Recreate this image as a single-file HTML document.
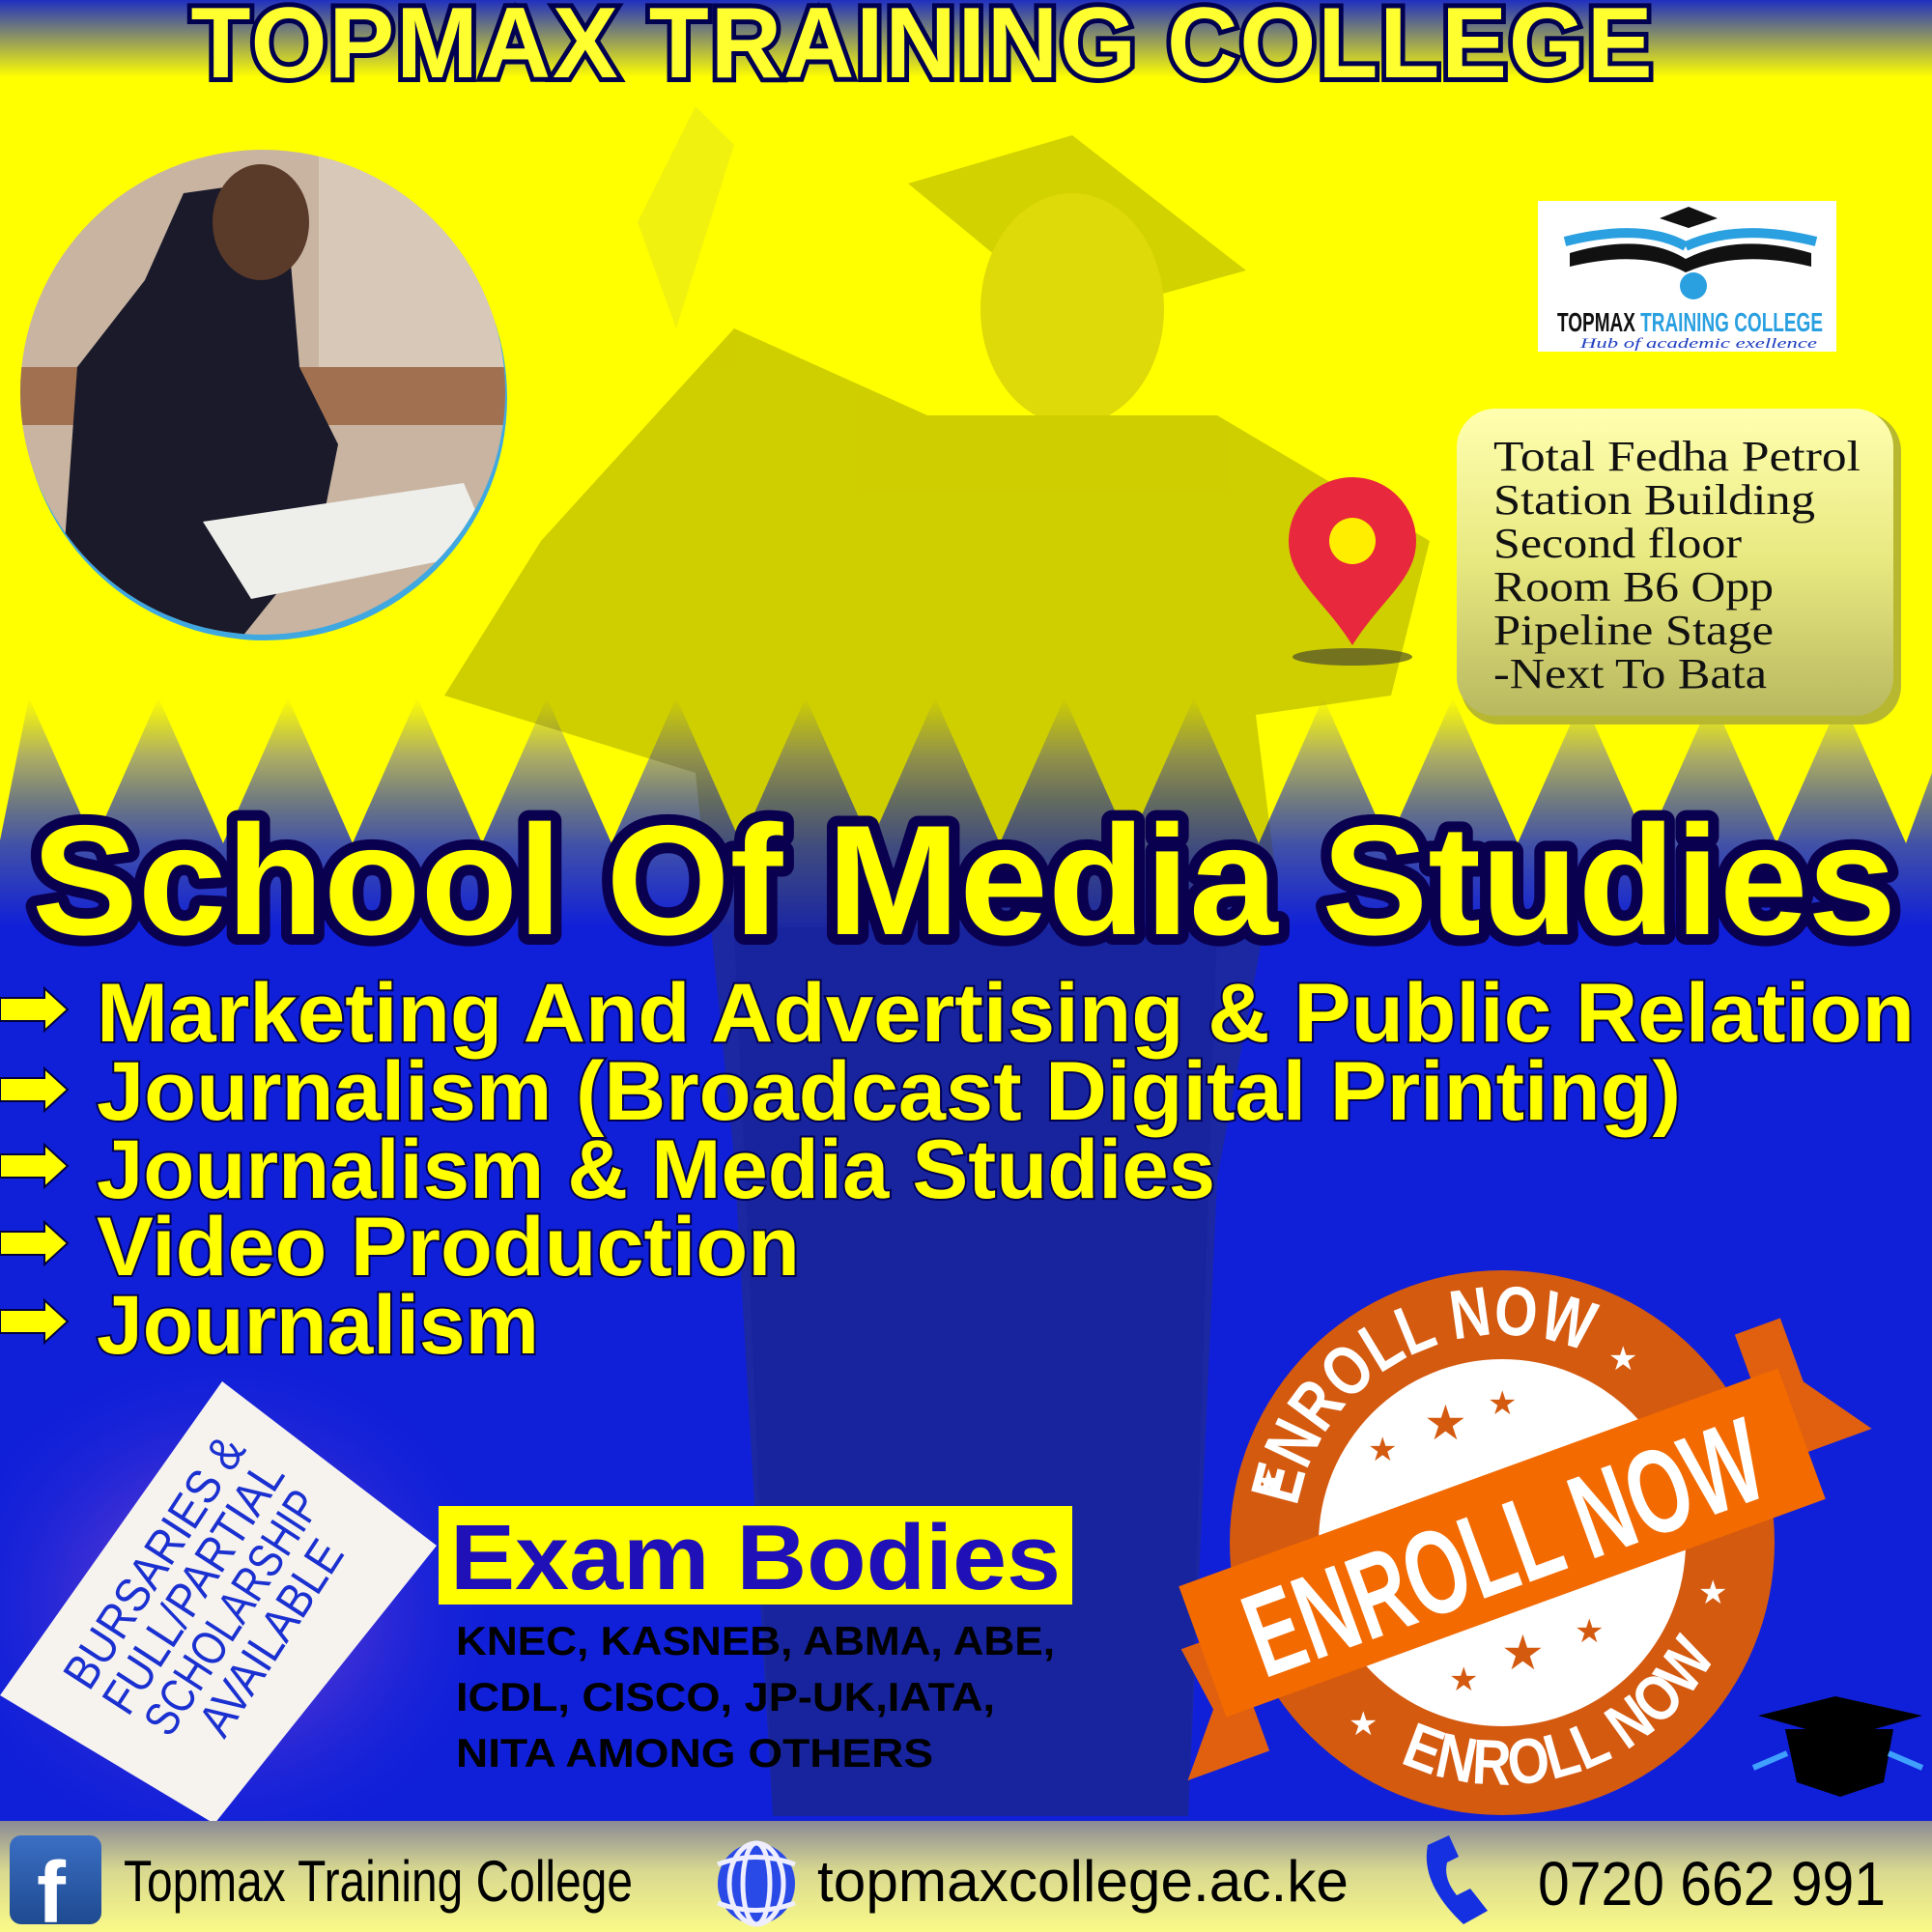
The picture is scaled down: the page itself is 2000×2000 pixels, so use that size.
<!DOCTYPE html>
<html><head><meta charset="utf-8"><style>
html,body{margin:0;padding:0;width:2000px;height:2000px;overflow:hidden}
svg{display:block}
</style></head><body>
<svg width="2000" height="2000" viewBox="0 0 2000 2000" xmlns="http://www.w3.org/2000/svg">
<defs>
<linearGradient id="topg" x1="0" y1="0" x2="0" y2="1">
<stop offset="0" stop-color="#2030c0"/><stop offset="1" stop-color="#ffff00"/></linearGradient>
<linearGradient id="zz" gradientUnits="userSpaceOnUse" x1="0" y1="722" x2="0" y2="960">
<stop offset="0" stop-color="#ffff00"/><stop offset="0.25" stop-color="#b0b060"/><stop offset="0.45" stop-color="#707a80"/><stop offset="0.65" stop-color="#4050a8"/><stop offset="1" stop-color="#1020d8"/></linearGradient>
<linearGradient id="footg" x1="0" y1="0" x2="0" y2="1">
<stop offset="0" stop-color="#8a8a96"/><stop offset="0.45" stop-color="#d8d890"/><stop offset="1" stop-color="#fafa88"/></linearGradient>
<linearGradient id="addrg" x1="0" y1="0" x2="0" y2="1">
<stop offset="0" stop-color="#ffffb0"/><stop offset="0.5" stop-color="#e8e880"/><stop offset="1" stop-color="#b8b860"/></linearGradient>
<radialGradient id="purp" cx="0.5" cy="0.5" r="0.5">
<stop offset="0" stop-color="#a050d0"/><stop offset="1" stop-color="#1020d8" stop-opacity="0"/></radialGradient>
<linearGradient id="fb" x1="0" y1="0" x2="0" y2="1"><stop offset="0" stop-color="#3b6fc4"/><stop offset="1" stop-color="#1e4a90"/></linearGradient>
<clipPath id="cc"><circle cx="272" cy="406" r="251"/></clipPath>
</defs>
<rect width="2000" height="2000" fill="#ffff00"/>
<rect width="2000" height="80" fill="url(#topg)"/>
<rect y="950" width="2000" height="940" fill="#1020d8"/>
<path d="M0 870 L30 722 L97 873 L164 722 L231 873 L298 722 L365 873 L432 722 L499 873 L566 722 L633 873 L700 722 L767 873 L834 722 L901 873 L968 722 L1035 873 L1102 722 L1169 873 L1236 722 L1303 873 L1370 722 L1437 873 L1504 722 L1571 873 L1638 722 L1705 873 L1772 722 L1839 873 L1906 722 L1973 873 L2000 800 L2000 960 L0 960Z" fill="url(#zz)"/>
<g opacity="0.25">
<path d="M660 230 L720 110 L760 150 L700 340 Z" fill="#c8c840"/>
<path d="M940 190 L1110 140 L1290 280 L1110 330 Z" fill="#505000"/>
<ellipse cx="1110" cy="320" rx="95" ry="120" fill="#806a20"/>
<path d="M560 560 L760 340 L960 430 L1260 430 L1480 560 L1440 720 L1300 740 L1320 900 L1260 1220 L1230 1880 L800 1880 L760 1200 L720 800 L460 720 Z" fill="#404000"/>
</g>
<path d="M760 960 L1260 960 L1230 1880 L800 1880 Z" fill="#0a1890" opacity="0.25"/>
<text x="955" y="80" text-anchor="middle" font-family="Liberation Sans, sans-serif" font-weight="bold" font-size="104" textLength="1515" lengthAdjust="spacingAndGlyphs" fill="#ffff30" stroke="#000050" stroke-width="10" paint-order="stroke" letter-spacing="2">TOPMAX TRAINING COLLEGE</text>
<circle cx="274" cy="412" r="251" fill="#40a8e0"/>
<g clip-path="url(#cc)">
<rect x="0" y="150" width="540" height="520" fill="#c8b4a0"/>
<rect x="330" y="150" width="200" height="230" fill="#d8c8b8"/>
<rect x="0" y="380" width="540" height="60" fill="#a07050"/>
<path d="M60 660 L80 380 L150 290 L190 200 L260 190 L300 260 L310 380 L350 460 L330 560 L250 660 Z" fill="#1a1a2a"/>
<path d="M210 540 L480 500 L510 570 L260 620 Z" fill="#eeeeea"/>
<ellipse cx="270" cy="230" rx="50" ry="60" fill="#5a3a28"/>
</g>
<rect x="1592" y="208" width="309" height="156" fill="#ffffff"/>
<path d="M1625 262 Q1700 240 1745 268 L1745 282 Q1700 258 1625 276Z" fill="#111"/>
<path d="M1745 268 Q1800 240 1875 262 L1875 276 Q1800 258 1745 282Z" fill="#111"/>
<path d="M1620 250 Q1700 230 1745 255" stroke="#2aa0e0" stroke-width="10" fill="none"/>
<path d="M1745 255 Q1800 230 1880 250" stroke="#2aa0e0" stroke-width="10" fill="none"/>
<path d="M1718 226 L1748 214 L1778 226 L1748 236Z" fill="#111"/>
<circle cx="1753" cy="296" r="14" fill="#2aa0e0"/>
<text x="1612" y="343" font-family="Liberation Sans, sans-serif" font-weight="bold" font-size="28" textLength="275" lengthAdjust="spacingAndGlyphs" fill="#111">TOPMAX <tspan fill="#2aa0e0">TRAINING COLLEGE</tspan></text>
<text x="1636" y="360" font-family="Liberation Serif, serif" font-style="italic" font-size="15" fill="#2040c0" textLength="245" lengthAdjust="spacingAndGlyphs">Hub of academic exellence</text>
<rect x="1512" y="427" width="456" height="323" rx="40" fill="#b8b830"/>
<rect x="1508" y="423" width="452" height="318" rx="40" fill="url(#addrg)"/>
<g font-family="Liberation Serif, serif" font-size="44" fill="#111">
<text x="1546" y="487" textLength="380" lengthAdjust="spacingAndGlyphs">Total Fedha Petrol</text>
<text x="1546" y="532" textLength="333" lengthAdjust="spacingAndGlyphs">Station Building</text>
<text x="1546" y="577" textLength="257" lengthAdjust="spacingAndGlyphs">Second floor</text>
<text x="1546" y="622" textLength="290" lengthAdjust="spacingAndGlyphs">Room B6 Opp</text>
<text x="1546" y="667" textLength="290" lengthAdjust="spacingAndGlyphs">Pipeline Stage</text>
<text x="1546" y="712" textLength="283" lengthAdjust="spacingAndGlyphs">-Next To Bata</text>
</g>
<ellipse cx="1400" cy="680" rx="62" ry="9" fill="#333" opacity="0.6"/>
<path d="M1400 668 C1370 620 1334 600 1334 560 A66 66 0 0 1 1466 560 C1466 600 1430 620 1400 668Z" fill="#e8283c"/>
<circle cx="1400" cy="560" r="24" fill="#ffee00"/>
<text x="998" y="967" text-anchor="middle" font-family="Liberation Sans, sans-serif" font-weight="bold" font-size="162" textLength="1930" lengthAdjust="spacingAndGlyphs" fill="#ffff00" stroke="#0a0050" stroke-width="22" paint-order="stroke" stroke-linejoin="round">School Of Media Studies</text>
<g fill="#ffff00" stroke="#000040" stroke-width="2">
<path d="M0 1033 L46 1033 L46 1023 L70 1045 L46 1067 L46 1057 L0 1057Z"/>
<path d="M0 1116 L46 1116 L46 1106 L70 1128 L46 1150 L46 1140 L0 1140Z"/>
<path d="M0 1195 L46 1195 L46 1185 L70 1207 L46 1229 L46 1219 L0 1219Z"/>
<path d="M0 1275 L46 1275 L46 1265 L70 1287 L46 1309 L46 1299 L0 1299Z"/>
<path d="M0 1356 L46 1356 L46 1346 L70 1368 L46 1390 L46 1380 L0 1380Z"/>
</g>
<g font-family="Liberation Sans, sans-serif" font-weight="bold" font-size="86" fill="#ffff00" stroke="#000050" stroke-width="4" paint-order="stroke">
<text x="100" y="1078" textLength="1882" lengthAdjust="spacingAndGlyphs">Marketing And Advertising &amp; Public Relation</text>
<text x="100" y="1159" textLength="1640" lengthAdjust="spacingAndGlyphs">Journalism (Broadcast Digital Printing)</text>
<text x="100" y="1240" textLength="1158" lengthAdjust="spacingAndGlyphs">Journalism &amp; Media Studies</text>
<text x="100" y="1320" textLength="728" lengthAdjust="spacingAndGlyphs">Video Production</text>
<text x="100" y="1401" textLength="458" lengthAdjust="spacingAndGlyphs">Journalism</text>
</g>
<ellipse cx="230" cy="1660" rx="300" ry="270" fill="url(#purp)"/>
<path d="M230 1430 L452 1600 L222 1888 L0 1755Z" fill="#f6f2ee"/>
<g transform="translate(226 1660) rotate(-57)" font-family="Liberation Sans, sans-serif" font-size="50" fill="#1a30d0" text-anchor="middle">
<text x="0" y="-62" textLength="300" lengthAdjust="spacingAndGlyphs">BURSARIES &amp;</text>
<text x="0" y="-14" textLength="300" lengthAdjust="spacingAndGlyphs">FULL/PARTIAL</text>
<text x="0" y="34" textLength="290" lengthAdjust="spacingAndGlyphs">SCHOLARSHIP</text>
<text x="0" y="82" textLength="230" lengthAdjust="spacingAndGlyphs">AVAILABLE</text>
</g>
<rect x="454" y="1559" width="656" height="102" fill="#ffff00"/>
<text x="466" y="1645" font-family="Liberation Sans, sans-serif" font-weight="bold" font-size="96" fill="#2010b8" textLength="632" lengthAdjust="spacingAndGlyphs">Exam Bodies</text>
<g font-family="Liberation Sans, sans-serif" font-weight="bold" font-size="42" fill="#000">
<text x="472" y="1713" textLength="620" lengthAdjust="spacingAndGlyphs">KNEC, KASNEB, ABMA, ABE,</text>
<text x="472" y="1771" textLength="558" lengthAdjust="spacingAndGlyphs">ICDL, CISCO, JP-UK,IATA,</text>
<text x="472" y="1829" textLength="494" lengthAdjust="spacingAndGlyphs">NITA AMONG OTHERS</text>
</g>
<g>
<circle cx="1555" cy="1597" r="282" fill="#d45a10"/>
<circle cx="1555" cy="1597" r="190" fill="#ffffff"/>
<path id="arcT" d="M1343 1560 A215 215 0 0 1 1693 1432" fill="none"/>
<text font-family="Liberation Sans, sans-serif" font-weight="bold" font-size="72" fill="#fff"><textPath href="#arcT" textLength="390" lengthAdjust="spacingAndGlyphs">ENROLL NOW</textPath></text>
<path id="arcB" d="M1449 1824 A250 250 0 0 0 1781 1703" fill="none"/>
<text font-family="Liberation Sans, sans-serif" font-weight="bold" font-size="66" fill="#fff"><textPath href="#arcB" textLength="380" lengthAdjust="spacingAndGlyphs">ENROLL NOW</textPath></text>
<g fill="#fff" font-size="34" font-family="DejaVu Sans, sans-serif"><text x="1298" y="1545">★</text><text x="1665" y="1418">★</text><text x="1758" y="1660">★</text><text x="1396" y="1796">★</text></g>
<g fill="#d45a10" font-family="DejaVu Sans, sans-serif"><text x="1416" y="1512" font-size="34">★</text><text x="1474" y="1490" font-size="50">★</text><text x="1540" y="1464" font-size="34">★</text><text x="1500" y="1750" font-size="34">★</text><text x="1554" y="1728" font-size="50">★</text><text x="1630" y="1700" font-size="34">★</text></g>
<g transform="translate(1555 1597) rotate(-20)">
<path d="M-350 -10 L-300 -10 L-300 120 L-390 120 L-340 60Z" fill="#e06010"/>
<path d="M350 -120 L300 -120 L300 20 L400 20 L350 -50Z" fill="#e06010"/>
<rect x="-330" y="-72" width="660" height="144" fill="#f26a00"/>
<text x="0" y="48" text-anchor="middle" font-family="Liberation Sans, sans-serif" font-weight="bold" font-size="124" fill="#fff" textLength="560" lengthAdjust="spacingAndGlyphs">ENROLL NOW</text>
</g>
</g>
<path d="M1820 1776 L1900 1756 L1990 1776 L1905 1800Z" fill="#000"/>
<path d="M1848 1790 L1960 1790 L1950 1845 L1905 1860 L1860 1845Z" fill="#000"/>
<path d="M1815 1830 L1850 1815 M1990 1830 L1955 1815" stroke="#40a0ff" stroke-width="6"/>
<rect y="1885" width="2000" height="115" fill="url(#footg)"/>
<rect x="10" y="1900" width="95" height="92" rx="12" fill="url(#fb)"/>
<text x="38" y="1990" font-family="Liberation Sans, sans-serif" font-weight="bold" font-size="90" fill="#fff">f</text>
<text x="128" y="1968" font-family="Liberation Sans, sans-serif" font-size="60" fill="#000" textLength="527" lengthAdjust="spacingAndGlyphs">Topmax Training College</text>
<g stroke="#1a3ae0" stroke-width="5" fill="none">
<ellipse cx="783" cy="1950" rx="40" ry="42" fill="#2a4ae8" stroke="none"/>
<ellipse cx="783" cy="1950" rx="14" ry="42" stroke="#eef"/>
<ellipse cx="783" cy="1950" rx="28" ry="42" stroke="#eef"/>
<path d="M743 1930 Q783 1915 823 1930 M743 1970 Q783 1985 823 1970" stroke="#eef"/>
</g>
<text x="846" y="1968" font-family="Liberation Sans, sans-serif" font-size="60" fill="#000" textLength="550" lengthAdjust="spacingAndGlyphs">topmaxcollege.ac.ke</text>
<path d="M1478 1910 Q1470 1950 1515 1992 L1540 1978 L1522 1955 L1508 1962 Q1494 1945 1498 1928 L1510 1922 L1500 1900Z" fill="#1430e0"/>
<text x="1592" y="1972" font-family="Liberation Sans, sans-serif" font-size="64" fill="#000" textLength="360" lengthAdjust="spacingAndGlyphs">0720 662 991</text>
</svg>
</body></html>
